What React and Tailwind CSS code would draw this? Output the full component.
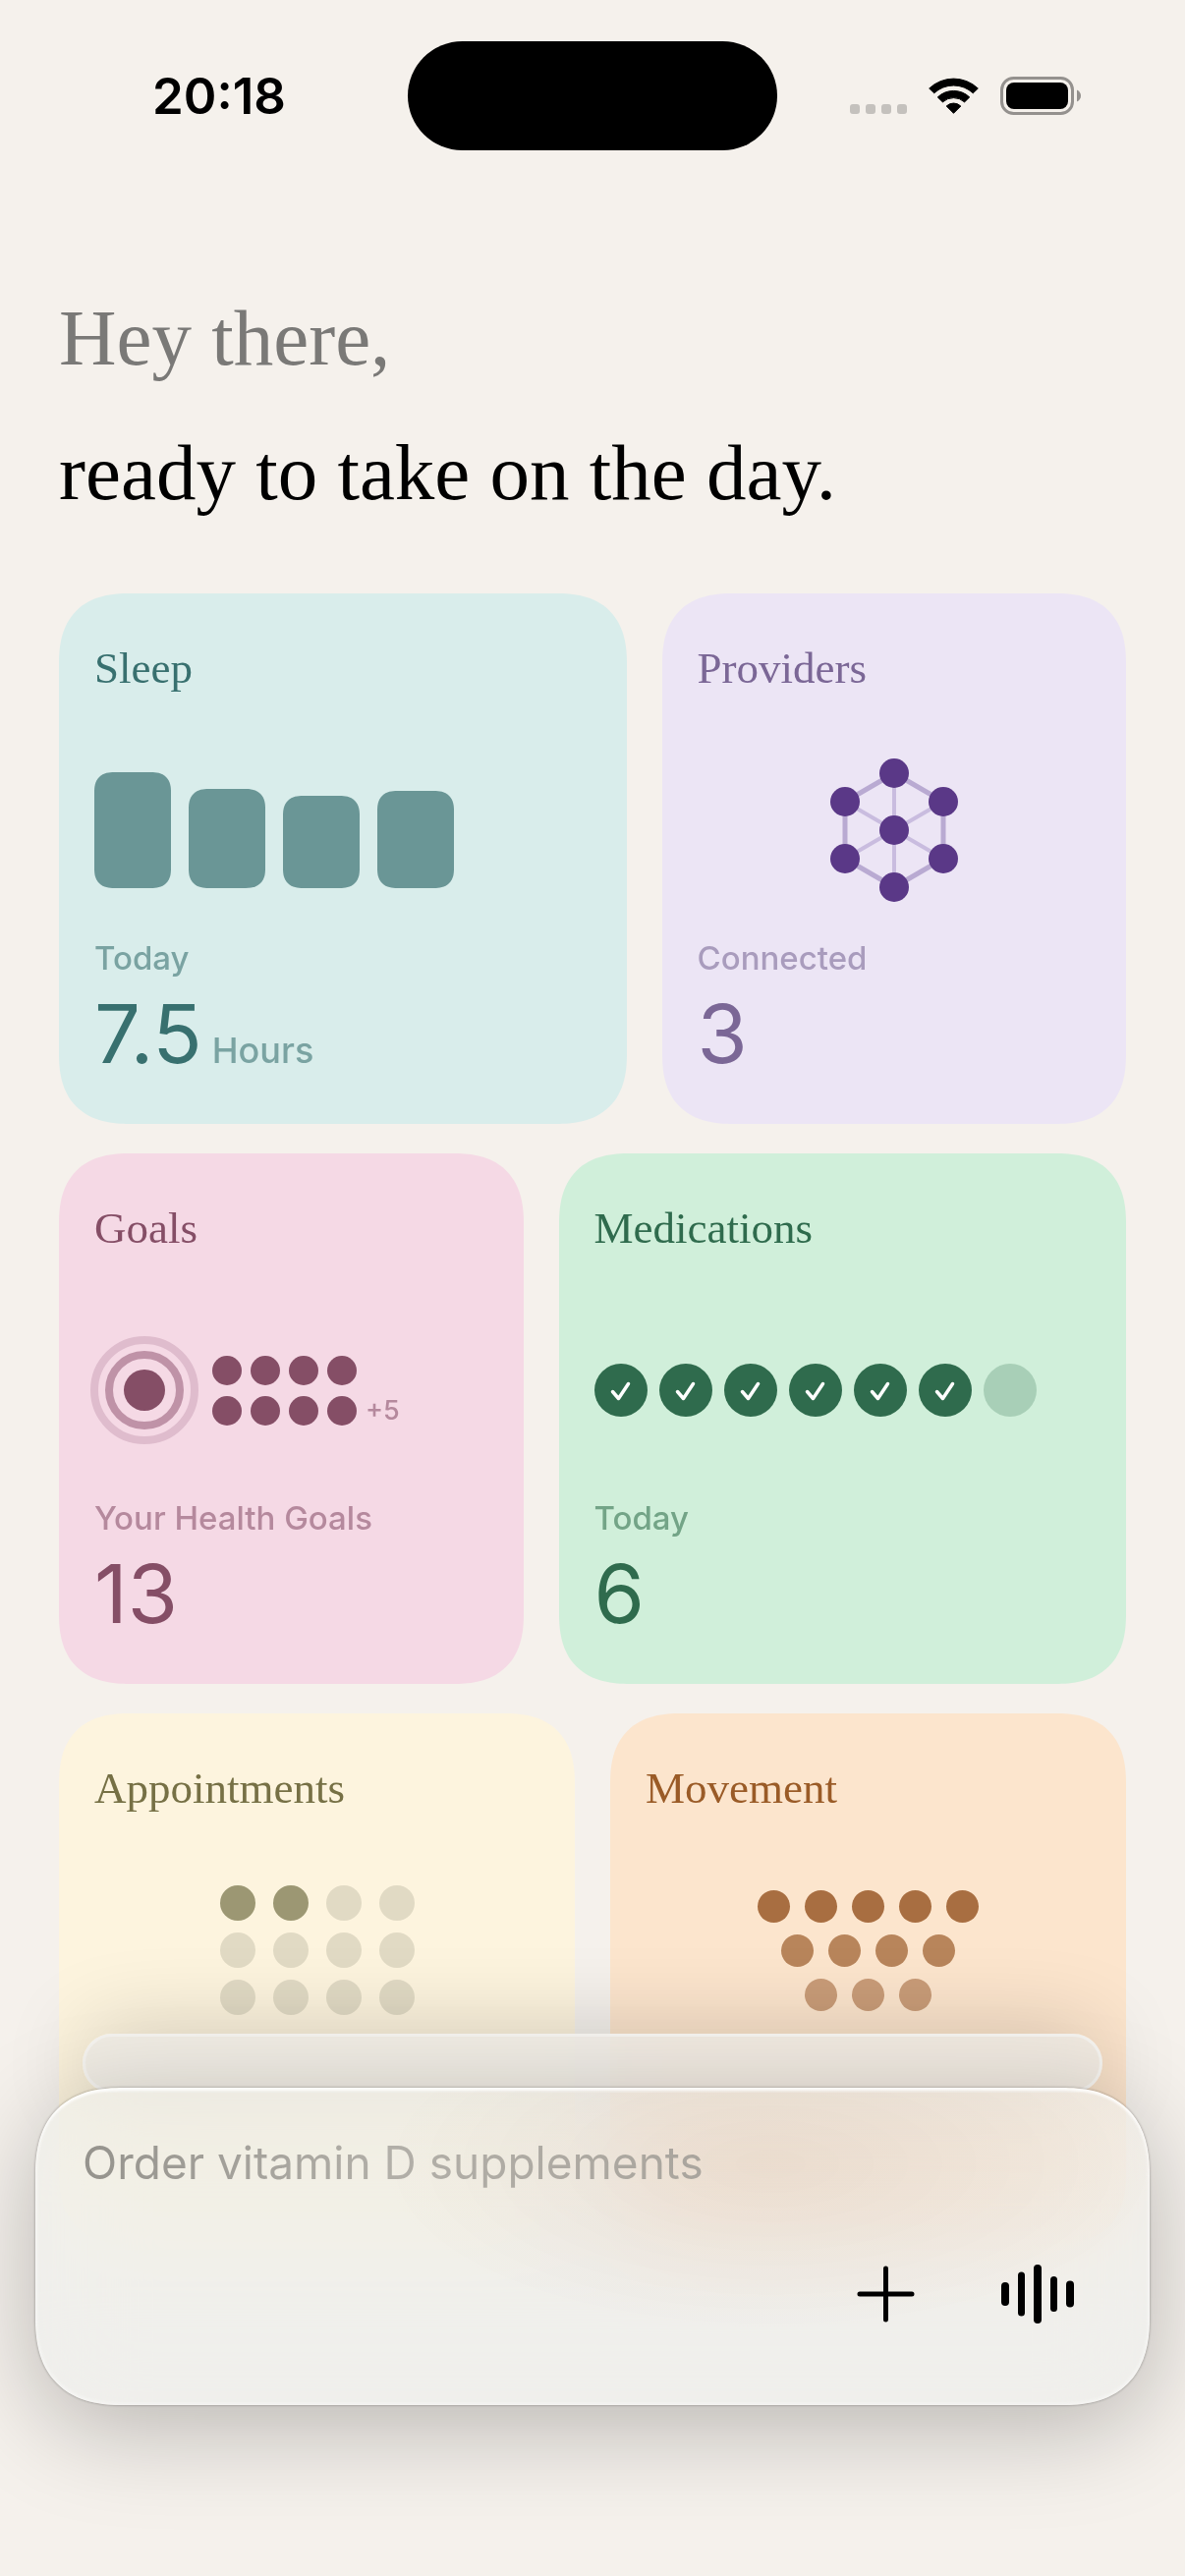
import React, { useState } from 'react';

const sleepBars = [118, 101, 94, 99];

// Centre of the web first, then the six outer nodes clockwise from the top
const nodes = [[65, 73], [65, 15], [115, 44], [115, 102], [65, 131], [15, 102], [15, 44]];

const waveBars = [
  { x: 4, w: 8, h: 24 },
  { x: 21, w: 7, h: 45 },
  { x: 37, w: 8, h: 60 },
  { x: 54, w: 7, h: 36 },
  { x: 70, w: 8, h: 27 },
];

const StatusBar = () => {
  return (
    <header className="grid grid-cols-3 items-center px-9 pt-[42px] font-['Inter',sans-serif]">
      <div className="pl-[119px] text-[51px] leading-[60px] font-semibold text-black">20:18</div>
      <div className="h-[111px] w-[376px] justify-self-center rounded-full bg-black"></div>
      <div className="flex items-center justify-end gap-[22px] pr-[70px]">
        <svg width="58" height="37" viewBox="0 0 58 37" fill="#c4c1bd">
          {[0, 16, 32, 48].map((x) => (
            <rect key={x} x={x} y="27" width="10" height="10" rx="3" />
          ))}
        </svg>
        <svg width="51" height="37" viewBox="0 0 51 37" fill="black" stroke="black" strokeWidth="1" strokeLinejoin="round">
          <path d="M.7 11A36 36 0 0 1 50.300 11L45.300 15.800A29 29 0 0 0 5.700 15.800Z" />
          <path d="M9.300 19.900A23.500 23.500 0 0 1 41.700 19.900L36.600 24.900A16.500 16.500 0 0 0 14.400 24.900Z" />
          <path d="M18.200 29A10.500 10.500 0 0 1 32.800 29L25.500 36.300Z" />
        </svg>
        <svg width="82" height="39" viewBox="0 0 82 39">
          <rect x="1.500" y="1.500" width="72" height="36" rx="12" fill="none" stroke="#94918e" strokeWidth="3" />
          <rect x="6" y="6" width="63" height="27" rx="8" fill="black" />
          <path d="M78 13.500c2.500 1 4 3.400 4 6s-1.500 5-4 6z" fill="#94918e" />
        </svg>
      </div>
    </header>
  );
};

const Card = ({ title, label, value, unit, className, titleColor, labelColor, children }) => {
  return (
    <article className={`flex h-[540px] flex-col rounded-[72px] px-9 [corner-shape:superellipse(1.3)] ${className}`}>
      <h2 className={`pt-12 font-['Liberation_Serif',serif] text-[45px] leading-[56px] ${titleColor}`}>{title}</h2>
      <div className="mt-[62px] flex h-[150px] items-center">{children}</div>
      <p className={`mt-8 text-[33px] leading-[46px] font-medium ${labelColor}`}>{label}</p>
      <p className={`flex items-baseline gap-[10px] text-[83px] leading-[108px] ${titleColor}`}>
        {value}
        {unit && <span className={`text-[36px] font-medium ${labelColor}`}>{unit}</span>}
      </p>
    </article>
  );
};

const SleepChart = () => (
  <div className="flex items-end gap-[18px]">
    {sleepBars.map((height, i) => (
      <div key={i} className="w-[78px] rounded-[20px] bg-[#6a9696] [corner-shape:superellipse(1.3)]" style={{ height }}></div>
    ))}
  </div>
);

const ProviderWeb = () => (
  <svg className="mx-auto" width="130" height="146" viewBox="0 0 130 146">
    <g stroke="#c9bcdf" strokeWidth="4">
      {nodes.slice(1).map(([x, y]) => (
        <line key={`${x}-${y}`} x1="65" y1="73" x2={x} y2={y} />
      ))}
    </g>
    <path d="M65 15 115 44V102L65 131 15 102V44Z" fill="none" stroke="#b9aad2" strokeWidth="5" />
    {nodes.map(([x, y]) => (
      <circle key={`${x}-${y}`} cx={x} cy={y} r="15" fill="#5a3887" />
    ))}
  </svg>
);

const GoalDots = () => (
  <div className="flex gap-[9px]">
    {[0, 1, 2, 3].map((i) => (
      <span key={i} className="size-[30px] rounded-full bg-[#854e66]"></span>
    ))}
  </div>
);

const GoalsChart = () => (
  <div className="flex items-center gap-[18px]">
    <svg className="overflow-visible" width="102" height="102" viewBox="0 0 102 102">
      <circle cx="51" cy="51" r="51" fill="none" stroke="#dfbccd" strokeWidth="8" />
      <circle cx="51" cy="51" r="36" fill="none" stroke="#bf92a7" strokeWidth="8" />
      <circle cx="51" cy="51" r="21" fill="#854e66" />
    </svg>
    <div className="flex flex-col gap-[11px]">
      <GoalDots />
      <div className="flex items-center gap-[9px]">
        <GoalDots />
        <span className="text-[27px] leading-[30px] font-medium text-[#b5899d]">+5</span>
      </div>
    </div>
  </div>
);

const MedicationChart = () => (
  <div className="flex gap-3">
    {[1, 2, 3, 4, 5, 6].map((n) => (
      <span key={n} className="flex size-[54px] items-center justify-center rounded-full bg-[#2f6b4d]">
        <svg width="54" height="54" viewBox="0 0 54 54" fill="none" stroke="white" strokeWidth="3.500" strokeLinecap="round" strokeLinejoin="round">
          <path d="M18.500 28.500 24.500 35.500 34.500 20.500" />
        </svg>
      </span>
    ))}
    <span className="size-[54px] rounded-full bg-[#a8cfb7]"></span>
  </div>
);

const AppointmentChart = () => (
  <div className="mx-auto grid grid-cols-4 gap-x-[18px] gap-y-3">
    {Array.from({ length: 12 }, (_, i) => (
      <span key={i} className={`size-9 rounded-full ${i < 2 ? 'bg-[#9c9773]' : 'bg-[#e1dac4]'}`}></span>
    ))}
  </div>
);

const MovementChart = () => {
  const rows = [
    { count: 5, color: 'bg-[#a86e41]' },
    { count: 4, color: 'bg-[#b8855b]' },
    { count: 3, color: 'bg-[#c99c78]' },
  ];

  return (
    <div className="mx-auto flex flex-col items-center gap-3">
      {rows.map((row) => (
        <div key={row.count} className="flex gap-[15px]">
          {Array.from({ length: row.count }, (_, i) => (
            <span key={i} className={`size-[33px] rounded-full ${row.color}`}></span>
          ))}
        </div>
      ))}
    </div>
  );
};

const Composer = () => {
  const [message, setMessage] = useState('');

  return (
    <div className="fixed inset-x-0 bottom-0 px-9 pb-[174px]">
      <div className="mx-12 -mb-[5px] h-[60px] rounded-[30px] border-[3px] border-[#f4f2ee] bg-[#ebe9e4]/80 shadow-[0_0_90px_rgba(0,0,0,0.2)] backdrop-blur-2xl"></div>
      <form
        className="relative flex h-[323px] flex-col justify-between rounded-[90px] bg-[#edeeec]/65 bg-[radial-gradient(400px_170px_at_66%_24%,rgba(180,130,95,0.13),transparent)] px-12 pt-[46px] pb-20 shadow-[0_0_3px_rgba(0,0,0,0.35),0_22px_100px_rgba(0,0,0,0.25),inset_0_3px_2px_rgba(255,255,255,0.7),inset_0_0_3px_2px_rgba(255,255,255,0.35)] backdrop-blur-[50px] backdrop-saturate-125 [corner-shape:superellipse(1.3)]"
        onSubmit={(e) => e.preventDefault()}
      >
        <input
          type="text"
          aria-label="Message"
          placeholder="Order vitamin D supplements"
          value={message}
          onChange={(e) => setMessage(e.target.value)}
          className="w-full bg-transparent text-[46px] leading-[60px] text-black outline-none placeholder:bg-linear-to-r placeholder:from-[#95938d] placeholder:via-[#b2afa8] placeholder:via-30% placeholder:to-[#9f9890] placeholder:bg-clip-text placeholder:text-transparent"
        />
        <div className="flex items-center justify-end gap-[82px] pr-[27px]">
          <button type="button" aria-label="Add">
            <svg width="63" height="66" viewBox="0 0 63 66" fill="none" stroke="black" strokeWidth="5" strokeLinecap="round">
              <path d="M31.500 7v52M5 33h53" />
            </svg>
          </button>
          <button type="button" aria-label="Voice">
            <svg width="80" height="66" viewBox="0 0 80 66" fill="black">
              {waveBars.map((bar) => (
                <rect key={bar.x} x={bar.x} y={33 - bar.h / 2} width={bar.w} height={bar.h} rx={bar.w / 2} />
              ))}
            </svg>
          </button>
        </div>
      </form>
    </div>
  );
};

const App = () => {
  return (
    <div className="min-h-screen bg-[#f5f1ec] pb-[338px] font-['Inter',sans-serif]">
      <StatusBar />
      <main className="px-[60px]">
        <h1 className="pt-[123px] font-['Liberation_Serif',serif] text-[81px] leading-[137px] text-black">
          <span className="block text-[#7a7977]">Hey there,</span>
          ready to take on the day.
        </h1>
        <section className="mt-[54px] flex flex-col gap-[30px]">
          <div className="grid grid-cols-[55fr_45fr] gap-9">
            <Card title="Sleep" label="Today" value="7.5" unit="Hours" className="bg-[#d9edeb]" titleColor="text-[#38706f]" labelColor="text-[#7aa3a2]">
              <SleepChart />
            </Card>
            <Card title="Providers" label="Connected" value="3" className="bg-[#ece5f5]" titleColor="text-[#7b6796]" labelColor="text-[#a99cbd]">
              <ProviderWeb />
            </Card>
          </div>
          <div className="grid grid-cols-[45fr_55fr] gap-9">
            <Card title="Goals" label="Your Health Goals" value="13" className="bg-[#f5d9e5]" titleColor="text-[#854e66]" labelColor="text-[#b5899d]">
              <GoalsChart />
            </Card>
            <Card title="Medications" label="Today" value="6" className="bg-[#d0efda]" titleColor="text-[#2f6b4d]" labelColor="text-[#73a487]">
              <MedicationChart />
            </Card>
          </div>
          <div className="grid grid-cols-2 gap-9">
            <Card title="Appointments" className="bg-[#fdf4de]" titleColor="text-[#767045]" labelColor="text-[#a5a07c]">
              <AppointmentChart />
            </Card>
            <Card title="Movement" className="bg-[#fce5cd]" titleColor="text-[#9a5b27]" labelColor="text-[#c3946f]">
              <MovementChart />
            </Card>
          </div>
        </section>
      </main>
      <Composer />
    </div>
  );
};

export default App;
